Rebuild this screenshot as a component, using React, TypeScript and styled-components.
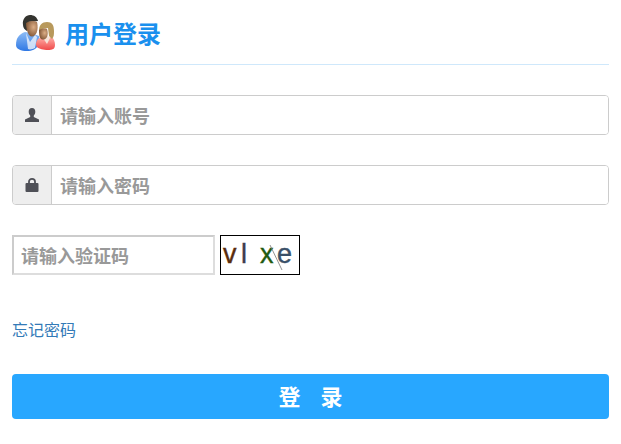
import React from "react";
import styled, { createGlobalStyle } from "styled-components";

const GlobalStyle = createGlobalStyle`
    html, body {
        margin: 0;
        padding: 0;
        background: #fff;
    }
    * {
        box-sizing: border-box;
    }
`;

const fontStack = `"Noto Sans CJK SC", "Liberation Sans", sans-serif`;

const UsersIcon = () => (
    <svg width="42" height="42" viewBox="0 0 42 42">
        <defs>
            <linearGradient id="blueShirt" x1="0" y1="0" x2="0" y2="1">
                <stop offset="0" stopColor="#8dbcf5" />
                <stop offset="1" stopColor="#2f78e4" />
            </linearGradient>
            <linearGradient id="redShirt" x1="0" y1="0" x2="0" y2="1">
                <stop offset="0" stopColor="#ffb0a8" />
                <stop offset="1" stopColor="#f04a4a" />
            </linearGradient>
            <radialGradient id="skin" cx="0.65" cy="0.4" r="0.75">
                <stop offset="0" stopColor="#dcae86" />
                <stop offset="1" stopColor="#74492a" />
            </radialGradient>
        </defs>
        <path d="M1 31c0-7 3-11 9-13l6 1 8 3c1 3 0 7-1 10-2 3-6 5-11 5-6 0-11-2-11-6z" fill="url(#blueShirt)" />
        <path d="M11 19l4 9 5-7 2 2-2 11c-2 1-5 2-7 1z" fill="#eef3fa" opacity="0.8" />
        <path d="M8 11c-1-6 3-10 7-10 4 0 7 2 8 6l-10 1-1 9c-2-1-4-3-4-6z" fill="#34342f" />
        <path d="M11 9c3-2 8-3 11-1 1 4 1 10-2 13-2 2-4 2-6 0-2-3-3-8-3-12z" fill="url(#skin)" />
        <path d="M22 33c-1-1-1-2-1-3 0-3 2-6 6-7l5 1 5-1c2 2 3 5 3 8 0 2-1 4-2 4-3 2-13 1-16-2z" fill="url(#redShirt)" />
        <path d="M28 24l4 6 3-6-2-2z" fill="#f6e3d8" />
        <path d="M24 17c0-6 3-9 8-9 5 0 7 3 7 9 0 3 0 6-2 8l-3-3-1-8-6 1z" fill="#b8995c" />
        <path d="M24 16c2-1 5-2 8-1 1 3 1 6 0 8-2 3-4 3-6 2-2-2-2-6-2-9z" fill="url(#skin)" />
    </svg>
);

const PersonIcon = () => (
    <svg width="14" height="14" viewBox="0 0 14 14">
        <path d="M7 0c2.300 0 3.300 1.700 3.300 3.700 0 1.700-.7 3-1.500 3.800v1.400L14 11.500V14H0V11.500L5.200 8.900V7.500C4.400 6.700 3.700 5.400 3.700 3.700 3.700 1.700 4.700 0 7 0z" fill="#4f5057" />
    </svg>
);

const LockIcon = () => (
    <svg width="14" height="14" viewBox="0 0 14 14">
        <rect x="0.500" y="5" width="13" height="9" rx="1" fill="#4f5057" />
        <path d="M4 5.500V3.500C4 1.900 5.200.9 7 .9s3 1 3 2.600v2" fill="none" stroke="#4f5057" strokeWidth="1.800" />
    </svg>
);

const Captcha = () => (
    <CaptchaBox>
        <svg width="78" height="38" viewBox="0 0 78 38">
            <CaptchaLetter x="2" y="27" fill="#5a2c0c" stroke="#5a2c0c">v</CaptchaLetter>
            <CaptchaLetter x="20" y="27" fill="#3d3d4c" stroke="#3d3d4c">l</CaptchaLetter>
            <CaptchaLetter x="39" y="27" fill="#1f5a10" stroke="#1f5a10">x</CaptchaLetter>
            <CaptchaLetter x="56" y="27" fill="#3a5068" stroke="#3a5068">e</CaptchaLetter>
            <line x1="49" y1="9" x2="61" y2="34" stroke="#777" strokeWidth="0.800" />
        </svg>
    </CaptchaBox>
);

const App: React.FC = () => {
    return (
        <>
            <GlobalStyle />
            <Page>
                <Header>
                    <UsersIcon />
                    <Title>用户登录</Title>
                </Header>
                <Form>
                    <InputGroup>
                        <Addon><PersonIcon /></Addon>
                        <GroupInput type="text" placeholder="请输入账号" />
                    </InputGroup>
                    <InputGroup>
                        <Addon><LockIcon /></Addon>
                        <GroupInput type="password" placeholder="请输入密码" />
                    </InputGroup>
                    <CaptchaRow>
                        <CaptchaInput type="text" placeholder="请输入验证码" />
                        <Captcha />
                    </CaptchaRow>
                    <ForgotLink href="#">忘记密码</ForgotLink>
                    <LoginButton type="button">登&nbsp;&nbsp;&nbsp;&nbsp;录</LoginButton>
                </Form>
            </Page>
        </>
    );
};

export default App;

const Page = styled.div`
    width: 621px;
    height: 444px;
    padding: 0 12px;
    font-family: ${fontStack};
    background: #fff;
    overflow: hidden;
`;

const Header = styled.div`
    height: 65px;
    padding: 14px 0 0 3px;
    display: flex;
    align-items: flex-start;
    gap: 8px;
    border-bottom: 1px solid #cfe8fb;
`;

const Title = styled.h1`
    margin: 0;
    font-size: 24px;
    line-height: 38px;
    font-weight: 700;
    color: #1a90ee;
`;

const Form = styled.form`
    display: flex;
    flex-direction: column;
    padding-top: 30px;
`;

const InputGroup = styled.div`
    display: flex;
    width: 597px;
    height: 40px;
    margin-bottom: 30px;
    border: 1px solid #ccc;
    border-radius: 4px;
    overflow: hidden;
`;

const Addon = styled.span`
    flex: none;
    width: 39px;
    display: flex;
    align-items: center;
    justify-content: center;
    background: #eee;
    border-right: 1px solid #ccc;
`;

const GroupInput = styled.input`
    flex: 1;
    min-width: 0;
    padding: 0 8px 1px 8px;
    border: none;
    outline: none;
    font-family: ${fontStack};
    font-size: 18px;
    font-weight: 700;
    color: #555;

    &::placeholder {
        color: #999;
        opacity: 1;
    }
`;

const CaptchaRow = styled.div`
    display: flex;
    gap: 5px;
    height: 40px;
`;

const CaptchaInput = styled.input`
    width: 203px;
    height: 40px;
    padding: 0 8px 1px 7px;
    border: 2px solid #ddd;
    border-color: #ccc #ddd #ddd #ccc;
    outline: none;
    font-family: ${fontStack};
    font-size: 18px;
    font-weight: 700;

    &::placeholder {
        color: #999;
        opacity: 1;
    }
`;

const CaptchaBox = styled.div`
    width: 80px;
    height: 40px;
    border: 1px solid #000;
    background: #fff;
`;

const CaptchaLetter = styled.text`
    font-family: "Liberation Sans", sans-serif;
    font-size: 27px;
    stroke-width: 0.400px;
`;

const ForgotLink = styled.a`
    align-self: flex-start;
    margin-top: 42px;
    font-size: 16px;
    line-height: 24px;
    color: #337ab7;
    text-decoration: none;
`;

const LoginButton = styled.button`
    width: 597px;
    height: 45px;
    margin-top: 33px;
    padding: 0 0 4px;
    border: none;
    border-radius: 4px;
    background: #28a7ff;
    color: #fff;
    font-family: ${fontStack};
    font-size: 22px;
    font-weight: 700;
    cursor: pointer;
`;
